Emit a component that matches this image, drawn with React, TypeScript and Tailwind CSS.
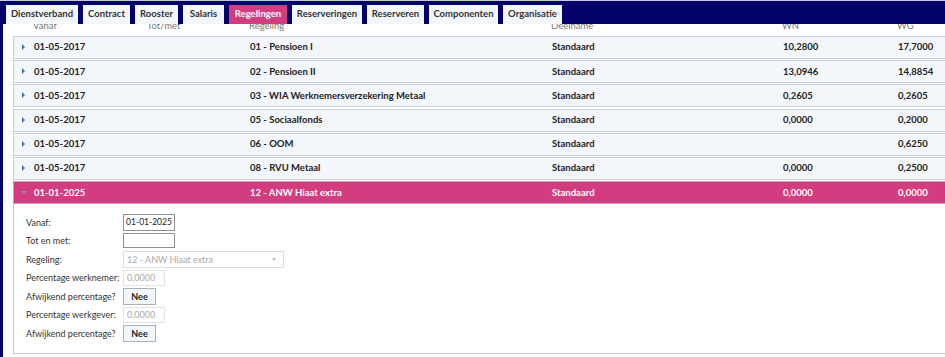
import React from 'react';

const tabs = [
  { label: 'Dienstverband', w: 76 },
  { label: 'Contract', w: 51 },
  { label: 'Rooster', w: 47 },
  { label: 'Salaris', w: 45 },
  { label: 'Regelingen', w: 62, active: true },
  { label: 'Reserveringen', w: 74 },
  { label: 'Reserveren', w: 61 },
  { label: 'Componenten', w: 73 },
  { label: 'Organisatie', w: 63 },
];

const rows = [
  { vanaf: '01-05-2017', regeling: '01 - Pensioen I', wn: '10,2800', wg: '17,7000' },
  { vanaf: '01-05-2017', regeling: '02 - Pensioen II', wn: '13,0946', wg: '14,8854' },
  { vanaf: '01-05-2017', regeling: '03 - WIA Werknemersverzekering Metaal', wn: '0,2605', wg: '0,2605' },
  { vanaf: '01-05-2017', regeling: '05 - Sociaalfonds', wn: '0,0000', wg: '0,2000' },
  { vanaf: '01-05-2017', regeling: '06 - OOM', wn: '', wg: '0,6250' },
  { vanaf: '01-05-2017', regeling: '08 - RVU Metaal', wn: '0,0000', wg: '0,2500' },
];

function Cols({ vanaf, totmet, regeling, deelname, wn, wg }: Record<string, string>) {
  return (
    <>
      <div className="w-[134px] pl-[20px]">{vanaf}</div>
      <div className="w-[102px]">{totmet}</div>
      <div className="w-[302px]">{regeling}</div>
      <div className="w-[231px]">{deelname}</div>
      <div className="w-[115px]">{wn}</div>
      <div className="w-[60px]">{wg}</div>
    </>
  );
}

function Row({ r }: { r: (typeof rows)[number] }) {
  return (
    <div className="relative mb-[1.2px] flex h-[23px] items-center whitespace-nowrap border border-[#c9ced8] bg-[#f3f6fa] text-[9.5px] font-bold text-[#222]">
      <span className="absolute left-[8px] top-[7px] h-0 w-0 border-y-[3px] border-l-[3px] border-y-transparent border-l-[#4b6fa8]" />
      <Cols vanaf={r.vanaf} totmet="" regeling={r.regeling} deelname="Standaard" wn={r.wn} wg={r.wg} />
    </div>
  );
}

function Field({ label, children }: { label: string; children: React.ReactNode }) {
  return (
    <div className="flex h-[18.5px] items-center">
      <div className="w-[97px] whitespace-nowrap text-[9px] text-[#333]">{label}</div>
      {children}
    </div>
  );
}

function NeeButton() {
  return (
    <div className="flex h-[17px] w-[33px] items-center justify-center border border-[#a9b0c0] bg-[#f3f6fb] text-[9px] font-bold text-[#222]">
      Nee
    </div>
  );
}

function DisabledInput() {
  return (
    <div className="flex h-[16px] w-[42px] items-center whitespace-nowrap border border-[#e2e2e2] px-[3px] text-[9px] text-[#aaa]">
      0,0000
    </div>
  );
}

export default function App() {
  return (
    <div className="relative h-[357px] w-[945px] overflow-hidden bg-white font-['Lato','Open_Sans',sans-serif]">
      <div className="h-[1px] bg-[#c8c8d8]" />
      <div className="relative z-10 flex h-[23px] items-end gap-[1px] bg-[#03036b] pl-[4px]">
        {tabs.map((t) => (
          <div
            key={t.label}
            style={{ width: t.w }}
            className={`flex h-[21px] items-center justify-center border-x-2 border-t-2 border-[#03036b] text-[9.5px] font-bold ${
              t.active ? 'bg-[#d43c80] text-white' : 'bg-[#f3f6fb] text-[#333]'
            }`}
          >
            {t.label}
          </div>
        ))}
      </div>
      <div className="flex">
        <div className="h-[340px] w-[3px] shrink-0 bg-[#03036b]" />
        <div className="w-[960px] shrink-0 pl-[10px]">
          <div className="-mt-[4px] flex h-[11px] items-end text-[9.5px] leading-[11px] text-[#777]">
            <Cols vanaf="Vanaf" totmet="Tot/met" regeling="Regeling" deelname="Deelname" wn="WN" wg="WG" />
          </div>
          <div className="mt-[5px]">
            {rows.map((r, i) => (
              <Row key={i} r={r} />
            ))}
            <div className="relative flex h-[23px] items-center whitespace-nowrap border border-[#c9a0b8] bg-[#d43c80] text-[9.5px] font-bold text-white">
              <span className="absolute left-[7px] top-[9px] h-0 w-0 border-x-[3px] border-t-[3px] border-x-transparent border-t-[#7d8fc8]" />
              <Cols vanaf="01-01-2025" totmet="" regeling="12 - ANW Hiaat extra" deelname="Standaard" wn="0,0000" wg="0,0000" />
            </div>
            <div className="h-[150px] border border-t-0 border-[#c8c8c8] pl-[12px] pt-[9px]">
              <Field label="Vanaf:">
                <div className="flex h-[17px] w-[52px] items-center justify-center whitespace-nowrap border border-[#8f8f8f] text-[8.5px] text-[#222]">
                  01-01-2025
                </div>
              </Field>
              <Field label="Tot en met:">
                <div className="h-[15px] w-[52px] border border-[#8f8f8f]" />
              </Field>
              <Field label="Regeling:">
                <div className="flex h-[17px] w-[161px] items-center justify-between whitespace-nowrap border border-[#dcdcdc] px-[3px] text-[9px] text-[#aaa]">
                  <span>12 - ANW Hiaat extra</span>
                  <span className="mr-[4px] h-0 w-0 border-x-[2.5px] border-t-[3px] border-x-transparent border-t-[#bbb]" />
                </div>
              </Field>
              <Field label="Percentage werknemer:">
                <DisabledInput />
              </Field>
              <Field label="Afwijkend percentage?">
                <NeeButton />
              </Field>
              <Field label="Percentage werkgever:">
                <DisabledInput />
              </Field>
              <Field label="Afwijkend percentage?">
                <NeeButton />
              </Field>
            </div>
          </div>
        </div>
      </div>
    </div>
  );
}
